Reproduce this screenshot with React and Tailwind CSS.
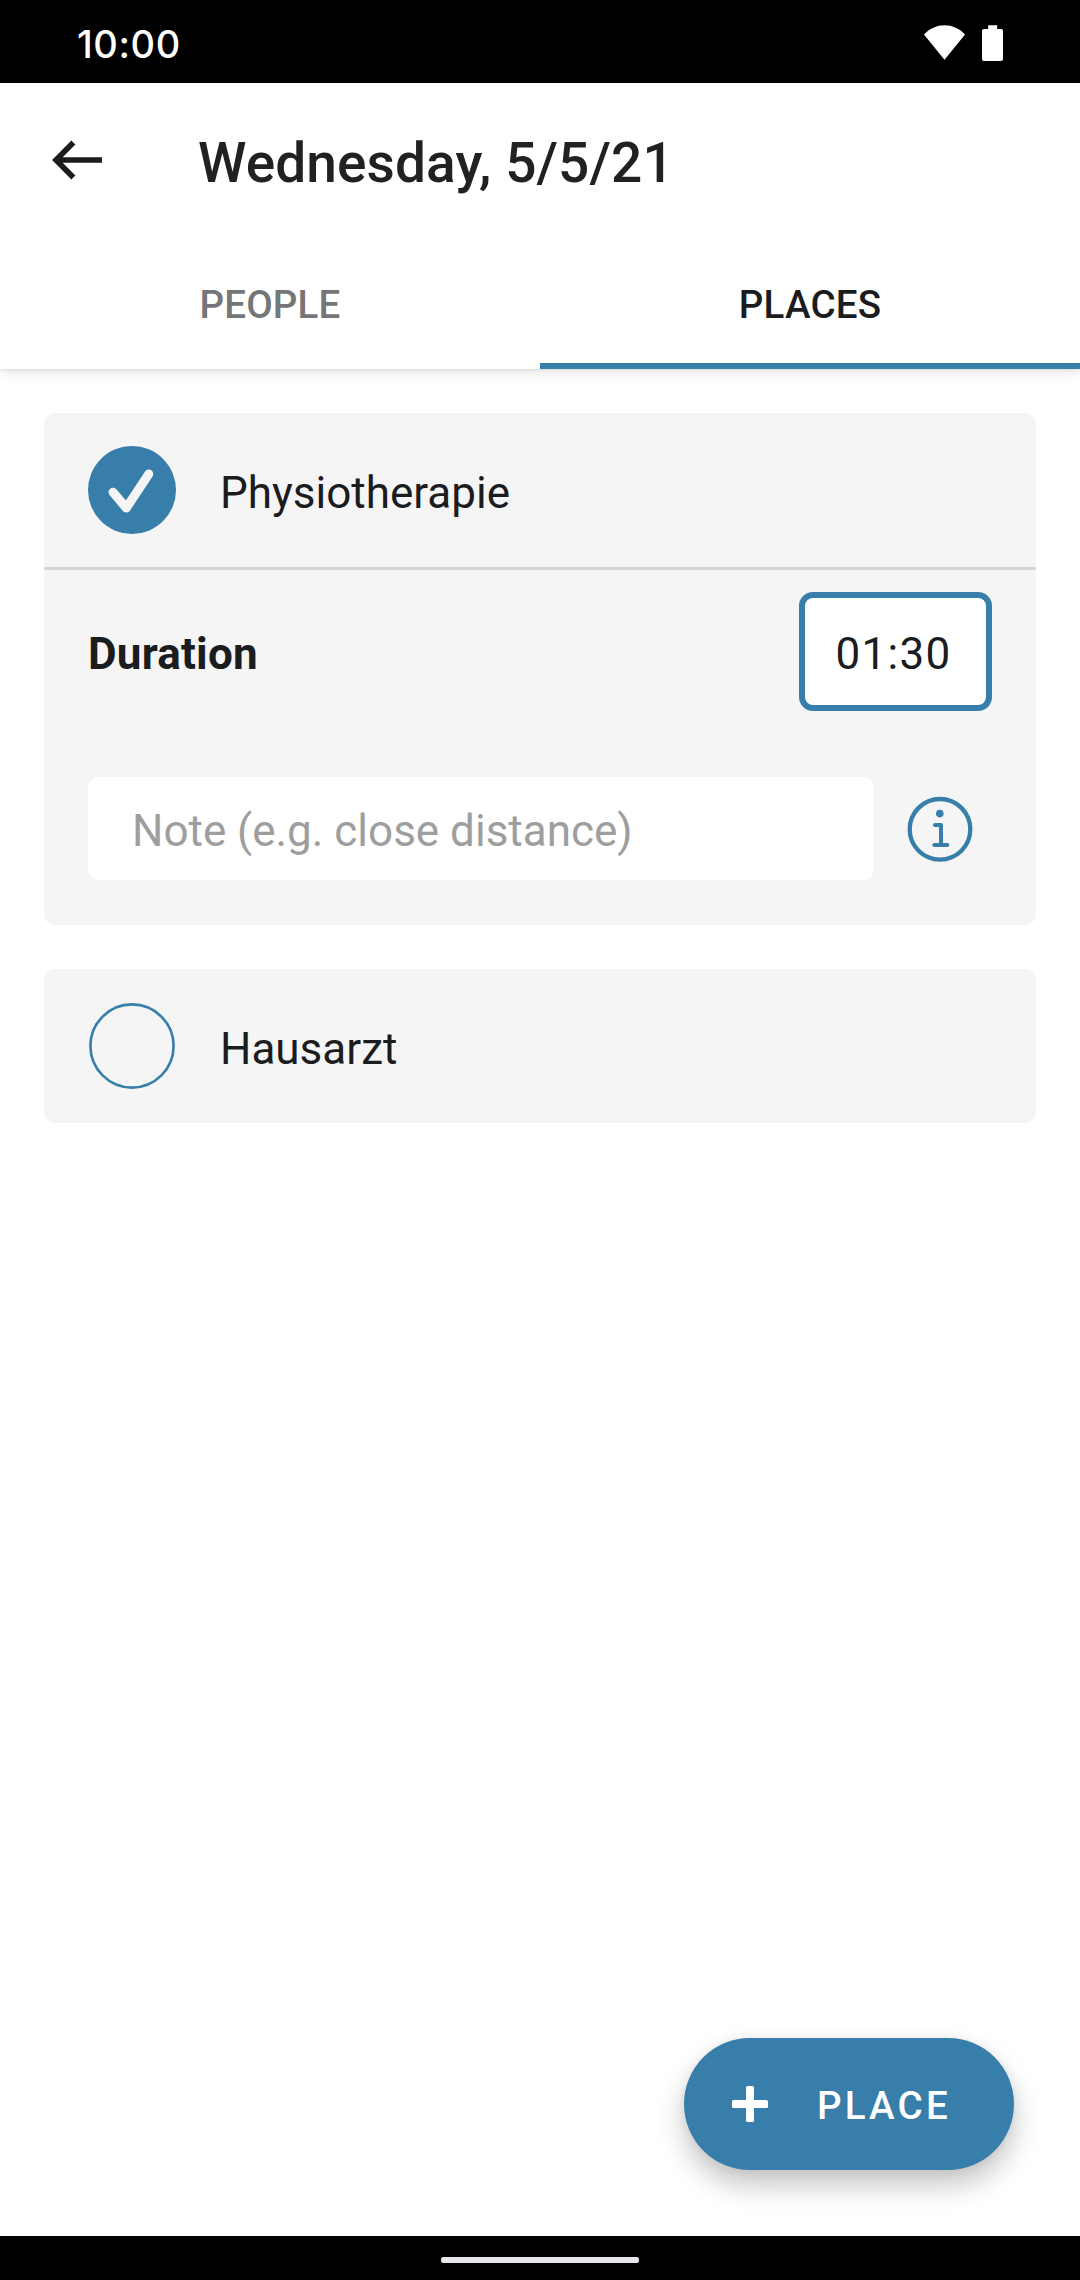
import React from "react";

function StatusBar() {
  return (
    <div className="flex h-[83px] shrink-0 items-center justify-between bg-black pr-[77px] pl-[77px] text-white">
      <span className="pt-[5px] font-['Inter',sans-serif] text-[38px] leading-none font-medium tracking-[0.6px]">10:00</span>
      <div className="flex items-center gap-[17px] pt-[3px]">
        <svg width="41" height="36" viewBox="0 0 41 36" fill="currentColor">
          <path d="M0 9.5C5.4 3.6 12.6 0.2 20.5 0.2S35.6 3.6 41 9.5L20.5 34.8Z" />
        </svg>
        <svg width="21" height="36" viewBox="0 0 21 36" fill="currentColor">
          <path d="M6.2 0.2h9V4H19a2 2 0 0 1 2 2v28a2 2 0 0 1-2 2H2a2 2 0 0 1-2-2V6a2 2 0 0 1 2-2h4.2Z" />
        </svg>
      </div>
    </div>
  );
}

function Header() {
  return (
    <header className="relative z-10 shrink-0 bg-white shadow-[0_3px_14px_rgba(0,0,0,0.11),0_1px_3px_rgba(0,0,0,0.08)]">
      <div className="flex h-[154px] items-center">
        <button className="ml-[44px] flex h-[66px] w-[66px] items-center justify-center" aria-label="Back">
          <svg width="66" height="66" viewBox="0 0 66 66" fill="none" stroke="#1a1c1e" strokeWidth="5.6">
            <path d="M29.4 15.5 12 33l17.4 17.5M12 33H58" />
          </svg>
        </button>
        <h1 className="ml-[88px] pt-[6px] text-[55px] leading-none font-medium tracking-[0.1px] text-[#212121]">Wednesday, 5/5/21</h1>
      </div>
      <nav className="grid h-[132px] grid-cols-2 text-[38.5px] leading-none tracking-[0.2px]">
        <button className="flex items-center justify-center border-b-[6px] border-transparent pt-[10px] font-medium text-[#757678]">PEOPLE</button>
        <button className="flex items-center justify-center border-b-[6px] border-[#377eaa] pt-[10px] font-medium text-[#1a1c1e]">PLACES</button>
      </nav>
    </header>
  );
}

function Check({ checked }) {
  return (
    <svg width="88" height="88" viewBox="0 0 88 88" fill="none" className="shrink-0">
      {checked ? (
        <>
          <circle cx="44" cy="44" r="44" fill="#377eaa" />
          <path d="M25 46.2 38.3 62 60.8 28" stroke="#f5f5f5" strokeWidth="9" strokeLinecap="round" strokeLinejoin="round" />
        </>
      ) : (
        <circle cx="44" cy="44" r="41.6" stroke="#377eaa" strokeWidth="2.6" />
      )}
    </svg>
  );
}

function PlaceRow({ name, checked }) {
  return (
    <div className="flex h-[154px] items-center gap-[44px] px-[44px]">
      <Check checked={checked} />
      <span className="pt-[6px] text-[44px] leading-none">{name}</span>
    </div>
  );
}

function InfoIcon() {
  return (
    <svg width="66" height="66" viewBox="0 0 66 66" fill="none" stroke="#377eaa" strokeWidth="4" strokeLinecap="round" strokeLinejoin="round">
      <circle cx="33" cy="33.3" r="30.3" strokeWidth="4.3" />
      <circle cx="32.8" cy="17.6" r="3.8" fill="#377eaa" stroke="none" />
      <path d="M28 28.9h6V49M27.3 49h13" />
    </svg>
  );
}

export default function App() {
  return (
    <div className="flex h-[2280px] w-[1080px] flex-col overflow-hidden bg-white font-['Roboto',sans-serif] text-[#1a1c1e]">
      <StatusBar />
      <Header />
      <main className="flex flex-1 flex-col gap-[44px] px-[44px] pt-[44px]">
        <section className="h-[512px] rounded-[11px] bg-[#f5f5f5]">
          <PlaceRow name="Physiotherapie" checked />
          <div className="h-[3px] bg-[#d6d6d6]" />
          <div className="flex items-center justify-between px-[44px] pt-[22px]">
            <span className="pt-[4px] text-[44px] leading-none font-bold tracking-[0.2px]">Duration</span>
            <div className="flex h-[119px] w-[193px] items-center justify-center rounded-[14px] border-[6px] border-[#377eaa] bg-white pt-[4px] pr-[4px] text-[44px] leading-none tracking-[1.3px]">
              01:30
            </div>
          </div>
          <div className="mt-[66px] flex items-center px-[44px]">
            <div className="flex h-[103px] w-[786px] items-center rounded-[11px] bg-white px-[44px] pt-[5px] text-[44px] leading-none text-[#9e9e9e]">
              Note (e.g. close distance)
            </div>
            <div className="ml-[33px]">
              <InfoIcon />
            </div>
          </div>
        </section>
        <section className="rounded-[11px] bg-[#f5f5f5]">
          <PlaceRow name="Hausarzt" />
        </section>
        <button className="mt-auto mr-[22px] mb-[66px] flex h-[132px] w-[330px] items-center self-end rounded-full bg-[#377eaa] pl-[48px] text-white shadow-[0_15px_28px_rgba(0,0,0,0.23),0_0_10px_rgba(0,0,0,0.06)]">
          <svg width="36" height="36" viewBox="0 0 36 36" fill="currentColor">
            <rect x="0" y="14" width="36" height="8" rx="1.5" />
            <rect x="14" y="0" width="8" height="36" rx="1.5" />
          </svg>
          <span className="ml-[49px] pt-[4px] text-[38.5px] leading-none font-medium tracking-[3.2px]">PLACE</span>
        </button>
      </main>
      <footer className="flex h-[44px] shrink-0 items-center justify-center bg-black">
        <div className="mt-[4px] h-[6px] w-[198px] rounded-[2.5px] bg-[#e8e6ea]" />
      </footer>
    </div>
  );
}
